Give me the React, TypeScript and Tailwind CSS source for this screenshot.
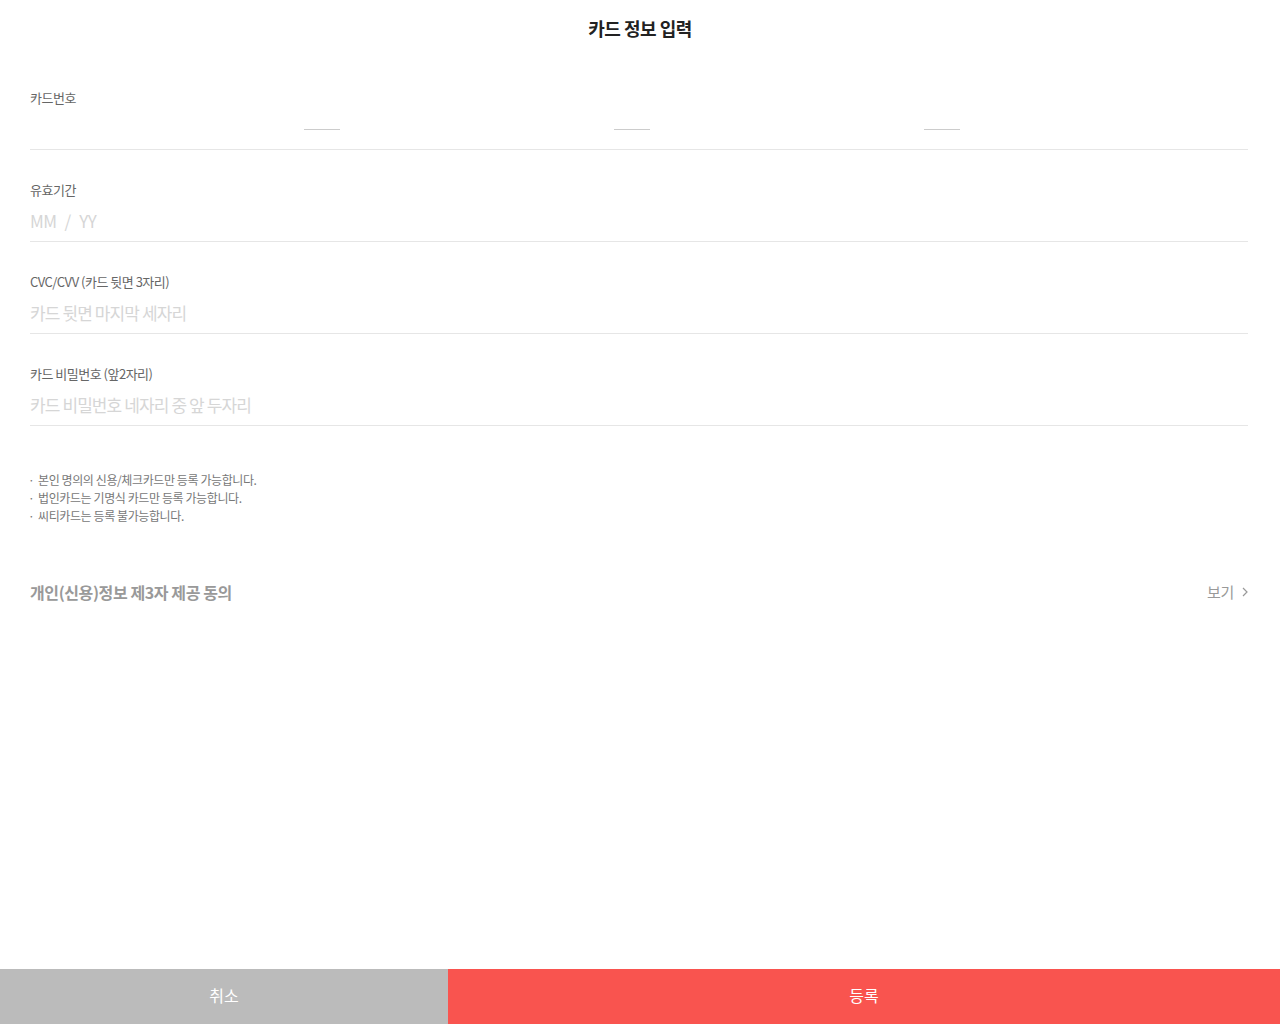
const font = { fontFamily: '"Noto Sans CJK KR", "Noto Sans", sans-serif' };

function Field({ label, children }: { label: string; children: React.ReactNode }) {
  return (
    <div className="border-b border-[#e6e6e6]">
      <div className="mt-[32px] h-4 text-[13px] leading-4 tracking-[-0.5px] text-[#666]">{label}</div>
      <div className="mt-2 mb-[5px] h-[30px] flex items-center">{children}</div>
    </div>
  );
}

function Placeholder({ text }: { text: string }) {
  return (
    <input
      readOnly
      placeholder={text}
      className="w-full bg-transparent text-[17px] tracking-[-0.9px] text-[#333] outline-none placeholder:text-[#d6d6d6]"
    />
  );
}

function CardNumber() {
  const seg = "h-[30px] bg-transparent outline-none text-[17px]";
  return (
    <div className="flex w-full items-center">
      <input readOnly className={`${seg} w-[274px]`} />
      <span className="h-px w-9 bg-[#cccccc]" />
      <input readOnly className={`${seg} w-[274px]`} />
      <span className="h-px w-9 bg-[#cccccc]" />
      <input readOnly className={`${seg} w-[274px]`} />
      <span className="h-px w-9 bg-[#cccccc]" />
      <input readOnly className={`${seg} flex-1 min-w-0`} />
    </div>
  );
}

function Expiry() {
  return (
    <div className="flex items-center text-[17px] text-[#d6d6d6]">
      <span className="tracking-[-0.5px]">MM</span>
      <span className="mx-[8px]">/</span>
      <span className="tracking-[-0.5px]">YY</span>
    </div>
  );
}

export default function App() {
  const notes = [
    "본인 명의의 신용/체크카드만 등록 가능합니다.",
    "법인카드는 기명식 카드만 등록 가능합니다.",
    "씨티카드는 등록 불가능합니다.",
  ];

  return (
    <div className="flex h-screen flex-col bg-white" style={font}>
      <header className="flex h-[58px] shrink-0 items-center justify-center">
        <h1 className="-mt-[2px] text-[18px] font-bold tracking-[-0.5px] text-[#222]">카드 정보 입력</h1>
      </header>

      <main className="flex-1 pl-[30px] pr-8">
        <Field label="카드번호">
          <CardNumber />
        </Field>
        <Field label="유효기간">
          <Expiry />
        </Field>
        <Field label="CVC/CVV (카드 뒷면 3자리)">
          <Placeholder text="카드 뒷면 마지막 세자리" />
        </Field>
        <Field label="카드 비밀번호 (앞2자리)">
          <Placeholder text="카드 비밀번호 네자리 중 앞 두자리" />
        </Field>

        <ul className="mt-[45px] text-[12px] leading-[18px] tracking-[-0.4px] text-[#777]">
          {notes.map((n) => (
            <li key={n} className="flex">
              <span className="-ml-[2px] w-[10px] shrink-0">·</span>
              <span>{n}</span>
            </li>
          ))}
        </ul>

        <div className="mt-[55px] flex h-6 items-center justify-between">
          <span className="text-[16px] font-bold tracking-[-0.4px] text-[#999]">개인(신용)정보 제3자 제공 동의</span>
          <button className="flex items-center gap-[8px] text-[15px] tracking-[-0.3px] text-[#999]">
            보기
            <svg width="6" height="10" viewBox="0 0 6 10" fill="none">
              <path d="M1 1l4 4-4 4" stroke="#999" strokeWidth="1.2" />
            </svg>
          </button>
        </div>
      </main>

      <footer className="flex h-[55px] shrink-0">
        <button className="w-[448px] bg-[#bbbbbb] pb-[3px] text-[16px] text-white">취소</button>
        <button className="flex-1 bg-[#f9544f] pb-[3px] text-[16px] text-white">등록</button>
      </footer>
    </div>
  );
}
